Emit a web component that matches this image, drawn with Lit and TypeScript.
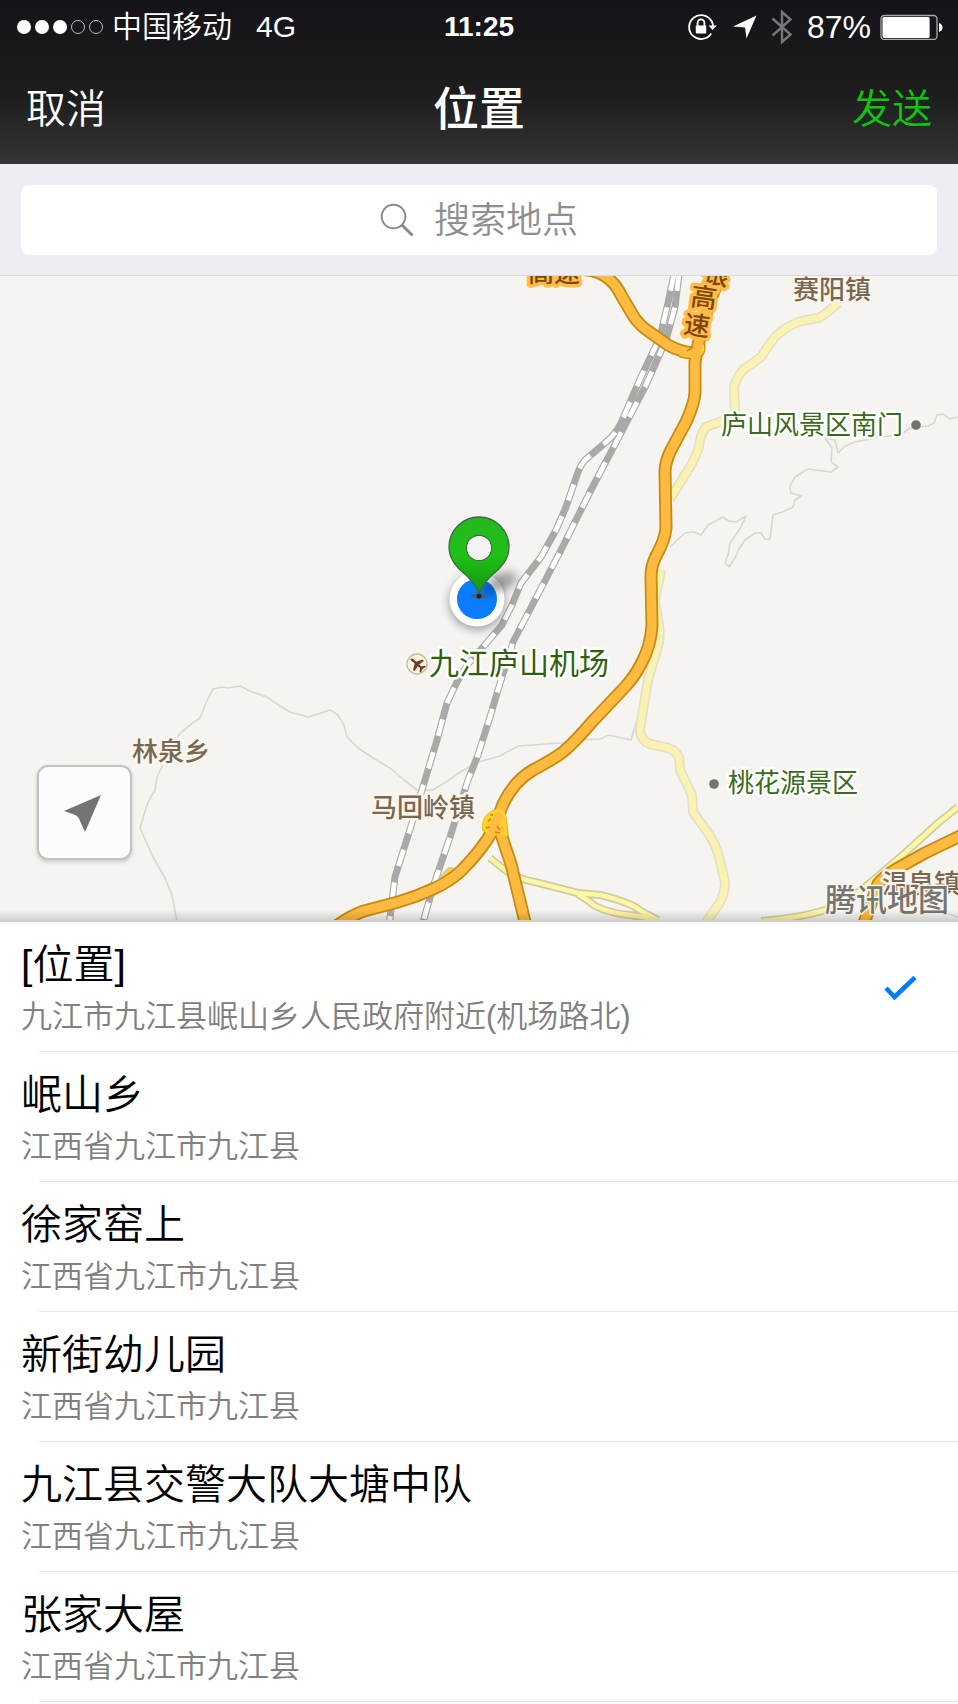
import { LitElement, html, svg, css } from "lit";
import { customElement, property, state } from "lit/decorators.js";

const FONT = css`"Liberation Sans", "Noto Sans CJK SC", sans-serif`;

@customElement("status-bar")
class StatusBar extends LitElement {
  @property({ type: Number }) level = 87;

  static styles = css`
    :host {
      display: grid;
      grid-template-columns: 1fr auto 1fr;
      align-items: center;
      height: 52px;
      padding: 1px 16px 0;
      color: #fff;
      font: 350 30px/36px ${FONT};
    }
    .side { display: flex; align-items: center; }
    .carrier { margin-left: 8px; }
    .network { margin-left: 24px; }
    .time { font-size: 28px; font-weight: 700; }
    .right { justify-content: flex-end; }
    .lock { margin-right: 16px; }
    .bluetooth { margin: 0 14px; }
    .level { font-size: 32px; }
    .battery { margin: 0 -2px 0 9px; }
    svg { display: block; flex: none; }
  `;

  render() {
    return html`
      <div class="side">
        <svg width="88" height="16" viewBox="0 0 88 16" role="img" aria-label="信号">
          ${[8, 26, 44].map((x) => svg`<circle cx=${x} cy="8" r="7" fill="#fff" />`)}
          ${[62, 80].map((x) => svg`<circle cx=${x} cy="8" r="6.5" fill="none" stroke="#bbb" />`)}
        </svg>
        <span class="carrier">中国移动</span>
        <span class="network">4G</span>
      </div>
      <div class="time">11:25</div>
      <div class="side right">
        <svg class="lock" width="30" height="28" viewBox="0 0 30 28" role="img" aria-label="方向锁定">
          <path d="M24.6 8.2 A12 12 0 1 0 24.2 20.6" fill="none" stroke="#fff" stroke-width="1.8" />
          <path d="M24.6 8 Q26 10.500 26 13" fill="none" stroke="#fff" stroke-width="1.8" />
          <path d="M21.500 12.500 H29.800 L25.600 17 Z" fill="#fff" />
          <rect x="8.800" y="12.500" width="10.400" height="8" rx="0.8" fill="#fff" />
          <path d="M10.600 13 V10 a3.400 3.600 0 0 1 6.800 0 V13" fill="none" stroke="#fff" stroke-width="1.8" />
        </svg>
        <svg width="24" height="24" viewBox="0 0 24 24" role="img" aria-label="定位">
          <path d="M23.500 0.500 L0 11.500 L12 12.400 L13.500 23.500 Z" fill="#fff" />
        </svg>
        <svg class="bluetooth" width="22" height="36" viewBox="0 0 22 36" role="img" aria-label="蓝牙">
          <path d="M1.500 9.500 L19.500 25.500 L11 33 V3 L19.500 10.500 L1.500 26.500" fill="none" stroke="#77777b" stroke-width="2.400" />
        </svg>
        <span class="level">${this.level}%</span>
        <svg class="battery" width="64" height="26" viewBox="0 0 64 26" role="img" aria-label="电量">
          <rect x="1" y="1.500" width="56" height="24" rx="3.500" fill="none" stroke="#aaa" stroke-width="1.300" />
          <rect x="2.500" y="3" width=${(53 * this.level) / 100 + 1} height="21" rx="1.500" fill="#fff" />
          <path d="M59 9 Q62.500 10 62.500 13.500 Q62.500 17 59 18 Z" fill="#fff" />
        </svg>
      </div>
    `;
  }
}

type Point = { text: string; x: number; y: number; kind: string };

const LABELS: Point[] = [
  { text: "赛阳镇", x: 793, y: 299, kind: "town" },
  { text: "庐山风景区南门", x: 721, y: 434, kind: "sight" },
  { text: "九江庐山机场", x: 429, y: 674, kind: "airport" },
  { text: "林泉乡", x: 132, y: 761, kind: "town" },
  { text: "马回岭镇", x: 371, y: 817, kind: "town" },
  { text: "桃花源景区", x: 728, y: 792, kind: "sight" },
  { text: "温泉镇", x: 882, y: 893, kind: "town" },
];

const TRACKS = [
  "M177 737 Q185 728 200 718 L206 703 L213 689 L222 687 L228 688 L240 686 L252 692 L267 697 L280 706 L290 712 L308 717 L318 714 L330 710 L338 715 L344 725 L347 737 L358 748 L373 758 L390 768 L404 780 L417 790 L433 790 L446 782 L460 772 L478 762 L500 756 L518 746 L561 743 L580 740 L601 739 L608 735 L631 740 L636 723",
  "M163 765 L157 777 L155 790 L148 802 L140 828 L153 857 L165 878 L172 895 L177 922",
  "M670 547 L685 533 L694 532 L701 535 L708 525 L723 517 L729 521 L736 522 L746 516 L741 527 L730 543 L728 555 L725 563 L729 567 L735 558 L739 549 L745 540 L755 533 L761 533 L765 539 L770 539 L773 515 L782 512 L793 507 L795 500 L801 496 L791 493 L790 486 L795 477 L808 469 L831 472 L838 467 L831 462 L832 448 L825 438 L835 440 L838 453 L845 446 L855 442 L880 437 L901 435 L910 428 L928 426 L934 423 L937 415 L943 414 L950 419 L958 417",
  "M905 853 L910 860",
  "M946 913 L958 917",
];

const LANES_WIDE = [
  "M838 303 Q824 316 818 318 Q806 320 798 322 Q784 328 775 337 Q768 346 762 356 Q752 364 744 369 Q736 378 734 387 L735 412 Q732 418 722 421 L706 427 Q700 434 699 447 Q696 456 690 467 L670 499",
  "M661 570 L655 600 L659 627 Q661 638 657 650 L648 680 L642 716 L640 730 Q641 741 650 744 L668 748 Q677 751 679 758 L680 770 L692 795 L693 812 L708 833 Q716 844 720 861 L725 882 Q725 894 719 904 L706 922",
];

const LANES = [
  "M490 858 L505 870 Q520 880 535 882 L578 893 L600 895 Q630 902 641 911 L658 920",
  "M578 894 Q588 900 595 906 Q612 914 630 915 L655 919",
  "M958 807 L938 823 L905 853 L865 887 Q846 903 825 910 Q800 918 761 921",
];

const HIGHWAYS = [
  "M560 270 Q596 266 610 280 Q617 286 621 295 L634 317 Q640 326 651 333 L668 345 Q678 351 693 353",
  "M722 270 L708 307 L698 345 L695 362 L695 392 Q695 402 686 422 L671 450 Q665 462 665 472 L666 528 Q665 540 656 556 Q651 566 651 577 L652 625 Q651 646 641 664 Q635 676 625 687 L591 723 Q575 742 563 752 Q552 760 533 770 Q514 781 503 804 L493 830 Q482 850 461 871 Q449 882 433 889 Q416 897 398 902 L364 911 Q352 915 336 926",
  "M499 828 Q505 846 511 864 L526 926",
  "M962 835 L925 853 L898 868 Q884 876 878 884 L863 926",
];

const RAILS = [
  "M674 274 L668 303 L660 337 L641 377 L621 423 Q616 434 605 443 L585 460 Q579 467 576 478 L566 507 L556 530 L541 557 L521 583 L512 605 L502 625 L483 647 L468 664 L457 682 L447 703 L437 740 L422 790 L412 823 L395 877 L389 926",
  "M679 274 L675 307 L666 340 L645 387 L621 433 L591 490 L561 550 L536 598 L513 642 L498 690 L490 717 L478 755 L468 780 L450 837 L433 887 L422 926",
];

@customElement("place-map")
class PlaceMap extends LitElement {
  static styles = css`
    :host { display: block; position: relative; background: #f5f4f1; overflow: hidden; }
    .map { display: block; width: 100%; height: auto; }
    .line { fill: none; stroke-linejoin: round; }
    .track { stroke: #d8d7d2; stroke-width: 1.6; }
    .lane-edge { stroke: #d0cba6; stroke-width: 8; }
    .lane { stroke: #fdf6a2; stroke-width: 4.6; }
    .wide-edge { stroke: #e2dfc2; stroke-width: 10; }
    .wide { stroke: #f9f2b2; stroke-width: 7; }
    .rail-edge { stroke: #a9a9a9; stroke-width: 7; }
    .rail { stroke: #fff; stroke-width: 4.8; stroke-dasharray: 17 17; }
    .road-edge { stroke: #c98a10; stroke-width: 13; }
    .road { stroke: #febb40; stroke-width: 9.4; }
    .ring-edge { fill: none; stroke: #cf9c12; stroke-width: 7; }
    .ring { fill: none; stroke: #ffd52e; stroke-width: 4; }
    .label {
      font-family: ${FONT};
      font-weight: 400;
      paint-order: stroke;
      stroke: #fff;
      stroke-width: 5px;
      stroke-linejoin: round;
    }
    .town { font-size: 26px; font-weight: 500; fill: #7a6753; stroke: #fbf6ec; }
    .sight { font-size: 26px; fill: #3a6a1c; }
    .airport { font-size: 30px; fill: #2f5f10; }
    .route { font-size: 26px; font-weight: 500; fill: #80470c; stroke: #ffbd48; stroke-width: 7px; }
    .brand { font-size: 31px; font-weight: 500; fill: #77746f; stroke: #f8f6f0; stroke-width: 3px; }
    .shade {
      position: absolute;
      inset: auto 0 0 0;
      height: 12px;
      background: linear-gradient(rgba(0, 0, 0, 0), rgba(0, 0, 0, 0.14));
      border-bottom: 2px solid #cfcfce;
      box-sizing: border-box;
      pointer-events: none;
    }
    .locate {
      position: absolute;
      left: 37px;
      bottom: 62px;
      width: 95px;
      height: 95px;
      padding: 0 4px 0 0;
      border: 2px solid #c2c2c2;
      border-radius: 11px;
      background: #fcfcfc;
      box-shadow: 0 2px 4px rgba(0, 0, 0, 0.18);
      display: grid;
      place-items: center;
    }
  `;

  private lines(paths: string[], cls: string) {
    return paths.map((d) => svg`<path class="line ${cls}" d=${d} />`);
  }

  render() {
    return html`
      <svg class="map" viewBox="0 276 958 646" role="img" aria-label="地图">
        <defs>
          <linearGradient id="pin" x1="0" y1="0" x2="0" y2="1">
            <stop offset="0" stop-color="#27b820" />
            <stop offset="0.5" stop-color="#1fc018" />
            <stop offset="1" stop-color="#11960d" />
          </linearGradient>
          <filter id="soft" x="-50%" y="-50%" width="200%" height="200%">
            <feGaussianBlur stdDeviation="5" />
          </filter>
        </defs>
        ${this.lines(TRACKS, "track")}
        ${this.lines(LANES_WIDE, "wide-edge")} ${this.lines(LANES_WIDE, "wide")}
        ${this.lines(LANES, "lane-edge")} ${this.lines(LANES, "lane")}
        ${this.lines(RAILS, "rail-edge")} ${this.lines(RAILS, "rail")}
        <path class="line lane-edge" d="M442 880 L450 871 L455 872" />
        <path class="line ring" d="M442 880 L450 871 L455 872" />
        <path class="ring-edge" d="M680 354 Q704 360 702 346 L697 338" />
        ${this.lines(HIGHWAYS, "road-edge")}
        <path d="M493 811 Q503 807 506 818 L508 836 L503 837 L498 835 L493 837 L483 830 Q481 817 493 811 Z" fill="#fdcf2c" stroke="#cf9c12" stroke-width="1.500" />
        <path class="ring" d="M680 354 Q704 360 702 346 L697 338" />
        ${this.lines(HIGHWAYS, "road")}
        <path d="M493 812 Q503 808 505 818 L506 834 L497 833 M493 812 Q482 818 484 829 L490 834" fill="none" stroke="#fdd22c" stroke-width="3" />
        <path d="M488 821 l3 -2 M486 828 l4 -1 M490 815 l3 0 M497 826 l3 4 M495 832 l5 1 M687 351 l6 -4" stroke="#c98a10" stroke-width="1.600" />

        <text class="label route" x="528" y="282">高速</text>
        <text class="label route" x="703" y="284" transform="rotate(12 716 275)">银</text>
        <text class="label route" x="691" y="307" transform="rotate(8 704 298)">高</text>
        <text class="label route" x="684" y="335" transform="rotate(8 697 326)">速</text>
        ${LABELS.map((l) => svg`<text class="label ${l.kind}" x=${l.x} y=${l.y}>${l.text}</text>`)}
        <text class="label brand" x="825" y="911">腾讯地图</text>

        <circle cx="916" cy="425" r="4.800" fill="#77716e" />
        <circle cx="714" cy="784" r="4.800" fill="#77716e" />
        <circle cx="417" cy="664" r="10" fill="#fdf5e2" stroke="#cdb98a" stroke-width="1.300" />
        <g transform="translate(417 664) rotate(-138)" fill="#6b3f26">
          <path d="M-8 -1 Q-8 1 -6 1.200 L-2 1.200 L1 7 L3 7 L2 1.200 L5 1 L7 4 L8.500 4 L7.500 0 L8.500 -4 L7 -4 L5 -1 L2 -1.200 L3 -7 L1 -7 L-2 -1.200 L-6 -1.200 Z" transform="scale(-1 1)" />
        </g>

        <circle cx="477" cy="602" r="28" opacity="0.35" filter="url(#soft)" />
        <circle cx="477" cy="599" r="27.500" fill="#fff" />
        <circle cx="477" cy="599" r="20" fill="#0a7dff" />
        <path d="M479 596 L492 577 Q512 566 518 578 Q514 588 496 592 Z" opacity="0.35" filter="url(#soft)" />
        <ellipse cx="479" cy="596" rx="8" ry="2.500" fill="#43617f" />
        <circle cx="479" cy="596" r="2.500" fill="#222" />
        <path fill="url(#pin)" fill-rule="evenodd" stroke="#3c6a45" stroke-width="1.300"
          d="M479 594 Q477 586 466 575 Q449 562 449 547 A30 30 0 0 1 509 547 Q509 562 492 575 Q481 586 479 594 Z M491.500 548 A12.500 12.500 0 1 0 466.500 548 A12.500 12.500 0 1 0 491.500 548 Z" />
        <circle cx="479" cy="548" r="12" fill="#f4f3f1" />
      </svg>
      <div class="shade"></div>
      <button class="locate" aria-label="回到当前位置">
        <svg width="38" height="38" viewBox="0 0 38 38">
          <path d="M37 1 L0 17 L10 20.500 Q15 22 16 27 L21 38 Z" fill="#737373" />
        </svg>
      </button>
    `;
  }
}

interface Place {
  name: string;
  address: string;
}

const PLACES: Place[] = [
  { name: "[位置]", address: "九江市九江县岷山乡人民政府附近(机场路北)" },
  { name: "岷山乡", address: "江西省九江市九江县" },
  { name: "徐家窑上", address: "江西省九江市九江县" },
  { name: "新街幼儿园", address: "江西省九江市九江县" },
  { name: "九江县交警大队大塘中队", address: "江西省九江市九江县" },
  { name: "张家大屋", address: "江西省九江市九江县" },
];

@customElement("app-root")
class AppRoot extends LitElement {
  @state() private selected = 0;

  static styles = css`
    :host {
      display: block;
      min-height: 100vh;
      background: #fff;
      color: #000;
      font-family: ${FONT};
      font-weight: 350;
    }
    button { font: inherit; color: inherit; background: none; border: 0; cursor: pointer; }
    .top { background: linear-gradient(#15131a, #19191a 35%, #1e1e1f 60%, #353536); }
    .nav {
      display: grid;
      grid-template-columns: 1fr auto 1fr;
      align-items: center;
      height: 111px;
      padding: 0 26px;
      box-sizing: border-box;
      color: #fff;
    }
    .action { padding: 0; font-size: 40px; line-height: 48px; justify-self: start; }
    .send { justify-self: end; color: #10c410; }
    .title { margin: 0; font-size: 46px; line-height: 56px; font-weight: 500; }
    .search { background: #eeedf4; padding: 21px 21px 20px; border-bottom: 1px solid #dcdad9; }
    .field {
      display: flex;
      align-items: center;
      justify-content: center;
      gap: 20px;
      height: 70px;
      border-radius: 8px;
      background: #fff;
    }
    .query {
      field-sizing: content;
      min-width: 36px;
      padding: 0 0 6px;
      border: 0;
      outline: 0;
      background: none;
      font: 350 36px/48px ${FONT};
    }
    .query::placeholder { color: #8e8e90; opacity: 1; }
    .places { list-style: none; margin: 0; padding: 0; }
    .place {
      display: flex;
      align-items: center;
      justify-content: space-between;
      width: 100%;
      padding: 19px 41px 16px 21px;
      text-align: left;
    }
    .text { display: grid; gap: 10px; }
    .name { font-size: 41px; line-height: 48px; }
    .address { font-size: 31px; line-height: 36px; color: #808080; }
    .item::after { content: ""; display: block; height: 1px; margin-left: 39px; background: #e6e6e6; }
  `;

  render() {
    return html`
      <header class="top">
        <status-bar></status-bar>
        <nav class="nav">
          <button class="action">取消</button>
          <h1 class="title">位置</h1>
          <button class="action send">发送</button>
        </nav>
      </header>
      <div class="search">
        <label class="field">
          <svg width="34" height="34" viewBox="0 0 34 34" aria-hidden="true">
            <circle cx="13.500" cy="13.500" r="11.800" fill="none" stroke="#8a8a8c" stroke-width="2" />
            <path d="M22 22 L32.500 32.500" stroke="#8a8a8c" stroke-width="3" />
          </svg>
          <input class="query" type="text" placeholder="搜索地点" aria-label="搜索地点" />
        </label>
      </div>
      <place-map></place-map>
      <ul class="places">
        ${PLACES.map(
          (p, i) => html`
            <li class="item">
              <button class="place" aria-pressed=${i === this.selected} @click=${() => (this.selected = i)}>
                <span class="text">
                  <span class="name">${p.name}</span>
                  <span class="address">${p.address}</span>
                </span>
                ${i === this.selected
                  ? html`<svg width="33" height="26" viewBox="0 0 33 26" aria-hidden="true">
                      <path d="M2 13 L10.500 22 L31 2.500" fill="none" stroke="#007cfc" stroke-width="4.600" />
                    </svg>`
                  : null}
              </button>
            </li>
          `
        )}
      </ul>
    `;
  }
}
